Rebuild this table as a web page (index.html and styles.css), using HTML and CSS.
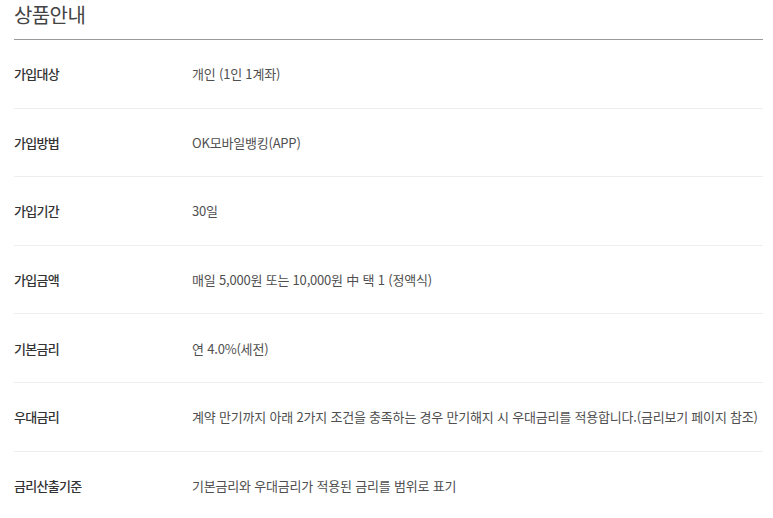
FILE: index.html
```html
<!DOCTYPE html>
<html lang="ko">
<head>
<meta charset="utf-8">
<title>상품안내</title>
<link rel="stylesheet" href="styles.css">
</head>
<body>
<section class="info">
  <h2 class="info-title">상품안내</h2>
  <dl class="info-list">
    <div class="info-row"><dt>가입대상</dt><dd>개인 (1인 1계좌)</dd></div>
    <div class="info-row"><dt>가입방법</dt><dd>OK모바일뱅킹(APP)</dd></div>
    <div class="info-row"><dt>가입기간</dt><dd>30일</dd></div>
    <div class="info-row"><dt>가입금액</dt><dd>매일 5,000원 또는 10,000원 中 택 1 (정액식)</dd></div>
    <div class="info-row"><dt>기본금리</dt><dd>연 4.0%(세전)</dd></div>
    <div class="info-row"><dt>우대금리</dt><dd>계약 만기까지 아래 2가지 조건을 충족하는 경우 만기해지 시 우대금리를 적용합니다.(금리보기 페이지 참조)</dd></div>
    <div class="info-row"><dt>금리산출기준</dt><dd>기본금리와 우대금리가 적용된 금리를 범위로 표기</dd></div>
  </dl>
</section>
</body>
</html>
```
FILE: styles.css
```css
html, body {
  margin: 0;
  padding: 0;
  background: #fff;
}
body {
  font-family: "Noto Sans CJK KR", "Noto Sans", sans-serif;
  color: #333;
}
.info {
  padding: 0 10px 0 14px;
}
.info-title {
  margin: 0;
  box-sizing: border-box;
  height: 40px;
  padding-top: 1px;
  font-size: 20px;
  line-height: 28px;
  font-weight: 400;
  letter-spacing: -0.6px;
  color: #444;
  border-bottom: 1px solid #9a9a9a;
}
.info-list {
  margin: 0;
}
.info-row {
  display: flex;
  align-items: center;
  height: 68.6px;
  box-sizing: border-box;
  border-bottom: 1px solid #eee;
  font-size: 13px;
  letter-spacing: -0.2px;
}
.info-row dt {
  width: 178px;
  flex: none;
  font-weight: 500;
  color: #333;
  letter-spacing: -0.7px;
}
.info-row dd {
  margin: 0;
  color: #4f4f4f;
}
```
